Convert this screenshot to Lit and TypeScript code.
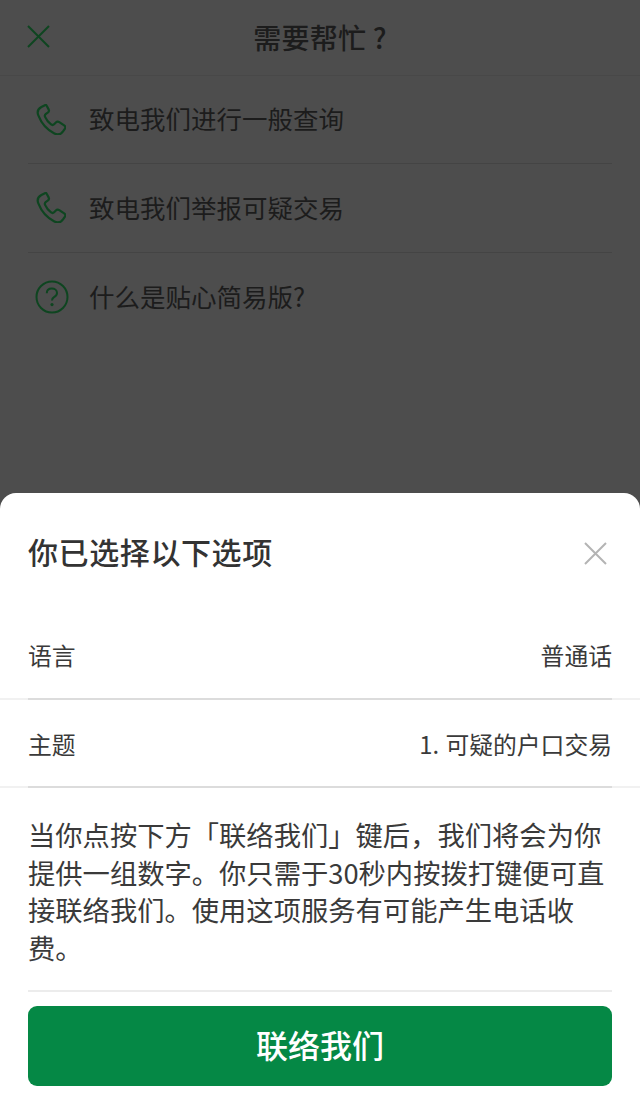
import { LitElement, html, css, svg } from "lit";
import { customElement } from "lit/decorators.js";

const NOTE = "当你点按下方「联络我们」键后\uFF0C我们将会为你提供一组数字。你只需于30秒内按拨打键便可直接联络我们。使用这项服务有可能产生电话收费。";

const phone = svg`<path d="M12.5 4.2 L9.2 5.9 C6.6 7.3 5.6 10 6.7 12.7 C9.2 19.2 13.6 24.3 19.8 27.5 C22.5 28.9 25.2 28.2 26.9 25.8 L28.3 23.8 C29 22.8 28.8 21.6 27.8 20.9 L23.8 18.2 C22.9 17.6 21.8 17.7 21 18.5 L19.6 19.9 C18.9 20.6 17.9 20.7 17.1 20.1 C15 18.5 13.3 16.4 12.2 13.9 C11.8 13 12.1 12.1 12.9 11.5 L14.4 10.5 C15.3 9.9 15.6 8.8 15.1 7.8 L13.4 4.6 C13.2 4.2 12.9 4.1 12.5 4.2 Z" fill="none" stroke="#0e4520" stroke-width="1.8" stroke-linejoin="round"/>`;

@customElement("app-root")
export class AppRoot extends LitElement {
  static styles = css`
    :host {
      display: flex;
      flex-direction: column;
      width: 640px;
      height: 1100px;
      overflow: hidden;
      background: #4d4d4d;
      font-family: "Noto Sans CJK SC", "Noto Sans", sans-serif;
    }
    .page { flex: 1; min-height: 0; color: #1c1c1c; }
    .topbar {
      height: 74.5px;
      border-bottom: 1px solid #484848;
      display: grid;
      grid-template-columns: 1fr auto 1fr;
      align-items: center;
      padding: 0 27px;
    }
    .topbar svg { display: block; margin-top: -1px; }
    .topbar h1 { margin: 0; font-size: 28px; font-weight: 500; line-height: 40px; letter-spacing: 0.2px; }
    .list { padding: 0 28px; }
    .item {
      height: 88.5px;
      box-sizing: border-box;
      border-bottom: 1px solid #444444;
      display: flex;
      align-items: center;
      font-size: 25.5px;
    }
    .item:last-child { border-bottom: none; }
    .item .label { margin-bottom: 3px; }
    .ico { width: 61px; flex: none; display: flex; }
    .ico.ph { padding-left: 8px; width: 53px; }
    .ico.help { padding-left: 5.5px; width: 55.5px; }
    .sheet {
      height: 607px;
      box-sizing: border-box;
      background: #fff;
      border-radius: 16px 16px 0 0;
      color: #333;
      display: flex;
      flex-direction: column;
    }
    .head {
      height: 118px;
      box-sizing: border-box;
      padding: 0 33px 0 28px;
      display: flex;
      justify-content: space-between;
      align-items: center;
    }
    .head svg { margin-top: 2px; }
    .head h2 { margin: 0 0 3px; font-size: 30px; font-weight: 500; letter-spacing: 0.6px; color: #333; }
    .row-wrap { background: linear-gradient(#f1f1f1, #f1f1f1) bottom right / 100% 2px no-repeat; }
    .row {
      margin: 0 28px;
      height: 88.5px;
      box-sizing: border-box;
      padding-top: 1px;
      border-bottom: 2px solid #dcdcdc;
      display: flex;
      justify-content: space-between;
      align-items: center;
      font-size: 23.8px;
      color: #3a3a3a;
    }
    .row .val { word-spacing: 1px; }
    .note {
      margin: 0 28px;
      padding: 28px 0 24px;
      border-bottom: 2px solid #ececec;
      font-size: 27.3px;
      line-height: 37.5px;
      color: #3a3a3a;
    }
    .btn {
      margin: 14px 28px 0;
      height: 80px;
      border: none;
      border-radius: 9px;
      background: #058845;
      color: #fff;
      font: 500 32px "Noto Sans CJK SC", "Noto Sans", sans-serif;
      padding: 0 0 4px;
    }
  `;

  private phoneIcon() {
    return html`<span class="ico ph"><svg width="30" height="30.6" viewBox="4.8 3.4 24.5 25">${phone}</svg></span>`;
  }

  render() {
    return html`
      <div class="page">
        <div class="topbar">
          <svg width="23" height="23" viewBox="0 0 23 23">
            <path d="M1 1 L22 22 M22 1 L1 22" stroke="#0e4520" stroke-width="2" fill="none" />
          </svg>
          <h1>需要帮忙 ?</h1>
          <span></span>
        </div>
        <div class="list">
          <div class="item">${this.phoneIcon()}<span class="label">致电我们进行一般查询</span></div>
          <div class="item">${this.phoneIcon()}<span class="label">致电我们举报可疑交易</span></div>
          <div class="item">
            <span class="ico help"><svg width="36" height="36" viewBox="0 0 36 36">
              <circle cx="18" cy="18" r="15.5" fill="none" stroke="#0e4520" stroke-width="2" />
              <path d="M12.8 14.2 C12.8 11.2 15 9.6 17.8 9.6 C20.8 9.6 23 11.4 23 14 C23 16.2 21.6 17.2 20 18.2 C18.6 19.1 18 19.9 18 21.6" fill="none" stroke="#0e4520" stroke-width="2" />
              <circle cx="18" cy="25.6" r="1.6" fill="#0e4520" />
            </svg></span><span class="label">什么是贴心简易版?</span>
          </div>
        </div>
      </div>
      <div class="sheet">
        <div class="head">
          <h2>你已选择以下选项</h2>
          <svg width="23" height="23" viewBox="0 0 23 23">
            <path d="M1 1 L22 22 M22 1 L1 22" stroke="#b4b4b4" stroke-width="2" fill="none" />
          </svg>
        </div>
        <div class="row-wrap"><div class="row"><span>语言</span><span>普通话</span></div></div>
        <div class="row-wrap"><div class="row"><span>主题</span><span class="val">1. 可疑的户口交易</span></div></div>
        <p class="note">${NOTE}</p>
        <button class="btn">联络我们</button>
      </div>
    `;
  }
}
